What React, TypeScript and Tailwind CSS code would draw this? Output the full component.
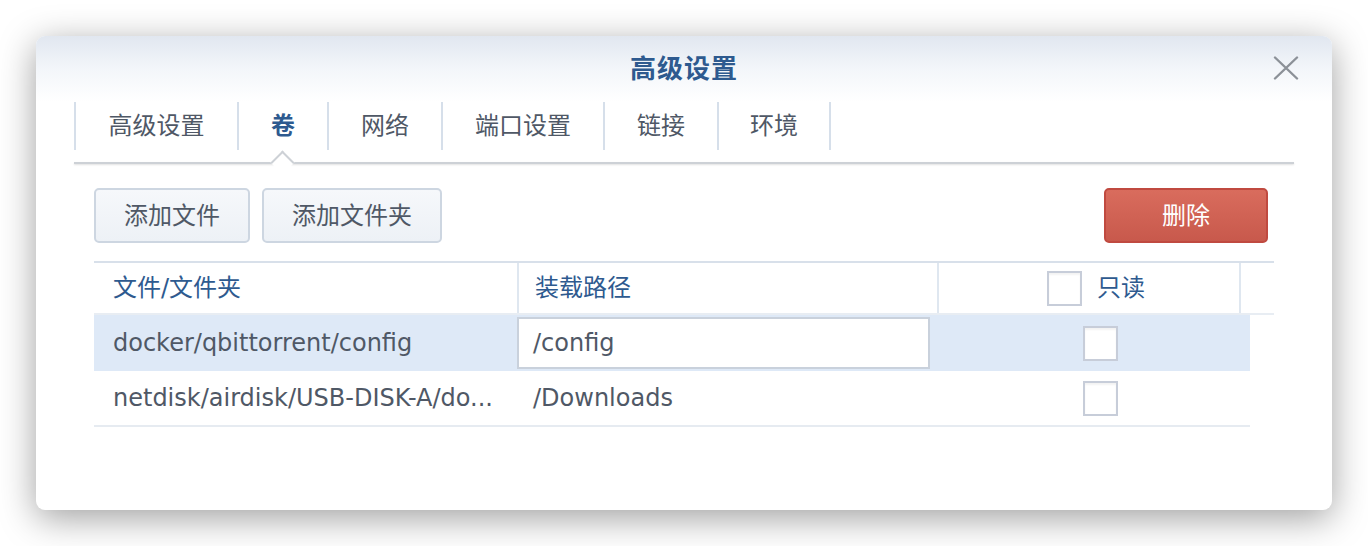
const font = { fontFamily: '"DejaVu Sans", "Noto Sans CJK SC", sans-serif' };

const tabs = [
  { label: '高级设置', width: 'w-[163px]' },
  { label: '卷', width: 'w-[90px]', active: true },
  { label: '网络', width: 'w-[114px]' },
  { label: '端口设置', width: 'w-[162px]' },
  { label: '链接', width: 'w-[114px]' },
  { label: '环境', width: 'w-[114px]' },
];

const rows = [
  { file: 'docker/qbittorrent/config', mount: '/config', selected: true },
  { file: 'netdisk/airdisk/USB-DISK-A/do...', mount: '/Downloads', selected: false },
];

function Checkbox() {
  return <div className="w-[35px] h-[35px] border-2 border-[#c7cdd9] bg-white shadow-[inset_0_2px_2px_rgba(0,0,0,0.05)]" />;
}

export default function App() {
  return (
    <div className="w-[1368px] h-[546px] bg-white p-[36px]" style={font}>
      <div className="w-[1296px] h-[474px] bg-white rounded-[9px] shadow-[0_8px_36px_rgba(0,0,0,0.38)] overflow-hidden">
        {/* title bar */}
        <div className="relative h-[66px] flex items-center justify-center bg-gradient-to-b from-[#e1e7f0] via-[#f3f6fa] to-white">
          <span className="text-[26px] font-bold text-[#2e5a8f] tracking-[1px]">高级设置</span>
          <button className="absolute right-[33px] top-[20px]">
            <svg width="26" height="24" viewBox="0 0 26 24" fill="none" stroke="#8c9198" strokeWidth="2.4" strokeLinecap="round">
              <path d="M2 1.5 L24 22.5 M24 1.5 L2 22.5" />
            </svg>
          </button>
        </div>

        {/* tabs */}
        <div className="mx-[38px] relative">
          <div className="flex h-[48px]">
            {tabs.map((t, i) => (
              <div
                key={t.label}
                className={`${t.width} h-full flex items-center justify-center border-l-2 border-[#d6dfea] ${i === tabs.length - 1 ? 'border-r-2' : ''} text-[24px] ${t.active ? 'text-[#2e5a8f] font-bold' : 'text-[#4f5866]'}`}
              >
                {t.label}
              </div>
            ))}
          </div>
          <div className="h-[12px]" />
          <div className="h-[2px] bg-[#cdd1d6] shadow-[0_1px_2px_rgba(0,0,0,0.12)]" />
          <div className="absolute left-[200px] top-[52px] w-[17px] h-[17px] rotate-45 bg-white border-t-2 border-l-2 border-[#cdd1d6]" />
        </div>

        {/* toolbar */}
        <div className="flex items-center justify-between pl-[58px] pr-[64px] mt-[24px]">
          <div className="flex gap-[12px]">
            <button className="h-[55px] w-[156px] rounded-[5px] border-2 border-[#cdd6e1] bg-gradient-to-b from-[#f6f8fb] to-[#edf1f6] text-[24px] text-[#4f5866]">
              添加文件
            </button>
            <button className="h-[55px] w-[180px] rounded-[5px] border-2 border-[#cdd6e1] bg-gradient-to-b from-[#f6f8fb] to-[#edf1f6] text-[24px] text-[#4f5866]">
              添加文件夹
            </button>
          </div>
          <button className="h-[55px] w-[164px] rounded-[5px] border-2 border-[#c04a40] bg-gradient-to-b from-[#d96c5d] to-[#c8594c] text-[24px] text-white">
            删除
          </button>
        </div>

        {/* table */}
        <div className="mx-[58px] mt-[18px]">
          <div className="flex h-[54px] border-t-2 border-b-2 border-t-[#d8e0ea] border-b-[#e8edf3] text-[24px] text-[#2e5a8f]">
            <div className="w-[423px] flex items-center pl-[19px]">文件/文件夹</div>
            <div className="w-[420px] flex items-center pl-[16px] border-l-2 border-[#dfe7f0]">装载路径</div>
            <div className="w-[304px] flex items-center justify-center gap-[15px] pl-[14px] border-l-2 border-r-2 border-[#dfe7f0]">
              <Checkbox />
              <span>只读</span>
            </div>
          </div>
          <div className="w-[1156px] text-[24px] text-[#4f5866]">
            {rows.map((r) => (
              <div key={r.file} className={`flex h-[56px] items-center ${r.selected ? 'bg-[#dee9f7]' : 'bg-white border-b-2 border-[#e6ebf1]'}`}>
                <div className="w-[423px] pl-[19px] whitespace-nowrap">{r.file}</div>
                <div className="w-[413px] h-full flex items-center">
                  {r.selected ? (
                    <div className="w-[413px] h-[52px] bg-white border-2 border-[#c9d1dc] flex items-center pl-[14px]">{r.mount}</div>
                  ) : (
                    <span className="pl-[16px]">{r.mount}</span>
                  )}
                </div>
                <div className="flex-1 flex items-center justify-center pl-[20px]">
                  <Checkbox />
                </div>
              </div>
            ))}
          </div>
        </div>
      </div>
    </div>
  );
}
